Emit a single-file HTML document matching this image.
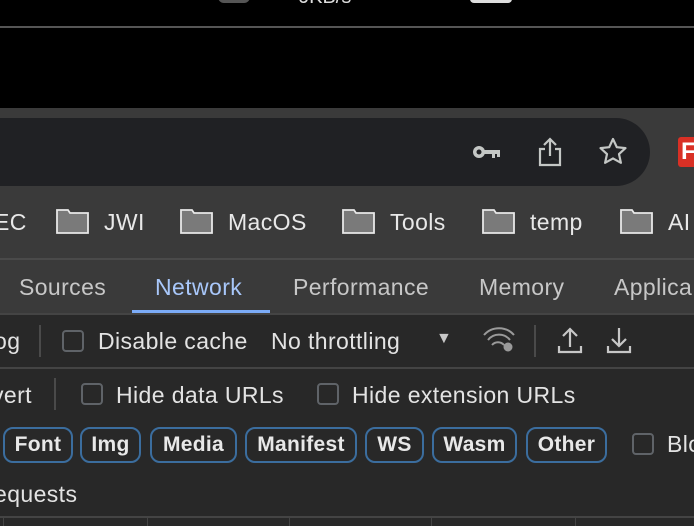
<!DOCTYPE html>
<html><head><style>
*{margin:0;padding:0;box-sizing:border-box}
body{width:694px;height:526px;overflow:hidden;background:#000;font-family:"Liberation Sans",Arial,sans-serif;position:relative;color:#e3e3e3}
.a{position:absolute;white-space:nowrap}
.t{font-size:23px;letter-spacing:0.4px}
.cb{position:absolute;width:22px;height:22px;border:2px solid #5f6368;border-radius:4px}
.chip{position:absolute;top:427px;height:36px;border:2px solid #3b6d9e;border-radius:10px;color:#e8e8e8;font-size:21px;font-weight:bold;line-height:32px;text-align:center;letter-spacing:0.3px}
</style></head><body>
<div class="a" style="left:218px;top:-4px;width:32px;height:7px;background:#555;border-radius:0 0 6px 6px"></div>
<div class="a" style="left:298px;top:-14px;font-size:20px;color:#ddd">0KB/s</div>
<div class="a" style="left:470px;top:-4px;width:42px;height:7px;background:#ddd;border-radius:0 0 4px 4px"></div>
<div class="a" style="left:0;top:26px;width:694px;height:2px;background:#555"></div>
<div class="a" style="left:0;top:108px;width:694px;height:150px;background:#3a3a3a"></div>
<div class="a" style="left:-40px;top:118px;width:690px;height:68px;background:#202124;border-radius:34px"></div>
<svg class="a" style="left:472px;top:142px" width="30" height="20" viewBox="0 0 30 20"><circle cx="7" cy="10" r="6" fill="#c4c7c5"/><circle cx="7" cy="10" r="2.5" fill="#202124"/><rect x="11" y="8" width="17" height="4" fill="#c4c7c5"/><rect x="20" y="11" width="3" height="5" fill="#c4c7c5"/><rect x="25" y="11" width="3" height="4" fill="#c4c7c5"/></svg>
<svg class="a" style="left:537px;top:137px" width="26" height="30" viewBox="0 0 26 30" fill="none" stroke="#c4c7c5" stroke-width="2.2"><path d="M13 2v17M7 8l6-6 6 6M8 12H3v16h20V12h-5"/></svg>
<svg class="a" style="left:598px;top:137px" width="30" height="30" viewBox="0 0 30 30" fill="none" stroke="#c4c7c5" stroke-width="2.2" stroke-linejoin="round"><path d="M15 2l3.8 8.2 8.7.9-6.5 6 1.9 8.7L15 21.4l-7.9 4.4L9 17.1l-6.5-6 8.7-.9z"/></svg>
<div class="a" style="left:678px;top:137px;width:20px;height:30px;background:#d93025;border-radius:3px;color:#fff;font-weight:bold;font-size:24px;line-height:30px;padding-left:3px">F</div>
<svg class="a" style="left:0;top:205px" width="694" height="30">
<g fill="#7a7a7a" stroke="#e8e8e8" stroke-width="1.8">
<path d="M57 5h11l2 3h18v20H57z"/><path d="M181 5h11l2 3h18v20H181z"/><path d="M343 5h11l2 3h18v20H343z"/><path d="M483 5h11l2 3h18v20H483z"/><path d="M621 5h11l2 3h18v20H621z"/>
</g></svg>
<div class="a t" style="left:-6px;top:209px;color:#e8e8e8">EC</div>
<div class="a t" style="left:104px;top:209px;color:#e8e8e8">JWI</div>
<div class="a t" style="left:228px;top:209px;color:#e8e8e8">MacOS</div>
<div class="a t" style="left:390px;top:209px;color:#e8e8e8">Tools</div>
<div class="a t" style="left:530px;top:209px;color:#e8e8e8">temp</div>
<div class="a t" style="left:668px;top:209px;color:#e8e8e8">AI</div>
<div class="a" style="left:0;top:258px;width:694px;height:2px;background:#4a4a4a"></div>
<div class="a" style="left:0;top:260px;width:694px;height:54px;background:#3a3a3a"></div>
<div class="a t" style="left:19px;top:274px;color:#c7c7c7">Sources</div>
<div class="a t" style="left:155px;top:274px;color:#a8c7fa">Network</div>
<div class="a t" style="left:293px;top:274px;color:#c7c7c7">Performance</div>
<div class="a t" style="left:479px;top:274px;color:#c7c7c7">Memory</div>
<div class="a t" style="left:614px;top:274px;color:#c7c7c7">Applica</div>
<div class="a" style="left:132px;top:310px;width:138px;height:3px;background:#7cacf8"></div>
<div class="a" style="left:0;top:313px;width:694px;height:213px;background:#282828"></div>
<div class="a" style="left:0;top:313px;width:694px;height:2px;background:#444"></div>
<div class="a t" style="left:-6px;top:328px">og</div>
<div class="a" style="left:39px;top:325px;width:2px;height:32px;background:#4a4a4a"></div>
<div class="cb" style="left:62px;top:330px"></div>
<div class="a t" style="left:98px;top:328px">Disable cache</div>
<div class="a t" style="left:271px;top:328px">No throttling</div>
<div class="a" style="left:436px;top:330px;font-size:16px;color:#c7c7c7">▼</div>
<svg class="a" style="left:482px;top:326px" width="34" height="28" viewBox="0 0 34 28" fill="none" stroke="#9a9a9a" stroke-width="2"><path d="M2 9a20 20 0 0 1 30 0M6 14a14 14 0 0 1 22 0M10 19a8 8 0 0 1 12 0"/><circle cx="26" cy="21" r="3.5" fill="#9a9a9a"/></svg>
<div class="a" style="left:534px;top:325px;width:2px;height:32px;background:#4a4a4a"></div>
<svg class="a" style="left:557px;top:326px" width="26" height="28" viewBox="0 0 26 28" fill="none" stroke="#c7c7c7" stroke-width="2.2"><path d="M13 3v18M6 10l7-7 7 7M2 20v6h22v-6"/></svg>
<svg class="a" style="left:606px;top:326px" width="26" height="28" viewBox="0 0 26 28" fill="none" stroke="#c7c7c7" stroke-width="2.2"><path d="M13 2v18M6 13l7 7 7-7M2 20v6h22v-6"/></svg>
<div class="a" style="left:0;top:367px;width:694px;height:2px;background:#444"></div>
<div class="a t" style="left:-8px;top:382px">vert</div>
<div class="a" style="left:54px;top:378px;width:2px;height:32px;background:#4a4a4a"></div>
<div class="cb" style="left:81px;top:383px"></div>
<div class="a t" style="left:116px;top:382px">Hide data URLs</div>
<div class="cb" style="left:317px;top:383px"></div>
<div class="a t" style="left:352px;top:382px">Hide extension URLs</div>
<div class="chip" style="left:3px;width:70px">Font</div>
<div class="chip" style="left:80px;width:61px">Img</div>
<div class="chip" style="left:150px;width:87px">Media</div>
<div class="chip" style="left:245px;width:112px">Manifest</div>
<div class="chip" style="left:365px;width:59px">WS</div>
<div class="chip" style="left:432px;width:85px">Wasm</div>
<div class="chip" style="left:526px;width:81px">Other</div>
<div class="cb" style="left:632px;top:433px"></div>
<div class="a t" style="left:667px;top:431px">Blo</div>
<div class="a t" style="left:-6px;top:481px">equests</div>
<div class="a" style="left:0;top:516px;width:694px;height:2px;background:#444"></div>
<div class="a" style="left:3px;top:518px;width:1px;height:8px;background:#444"></div>
<div class="a" style="left:147px;top:518px;width:1px;height:8px;background:#444"></div>
<div class="a" style="left:289px;top:518px;width:1px;height:8px;background:#444"></div>
<div class="a" style="left:431px;top:518px;width:1px;height:8px;background:#444"></div>
<div class="a" style="left:575px;top:518px;width:1px;height:8px;background:#444"></div>
</body></html>
